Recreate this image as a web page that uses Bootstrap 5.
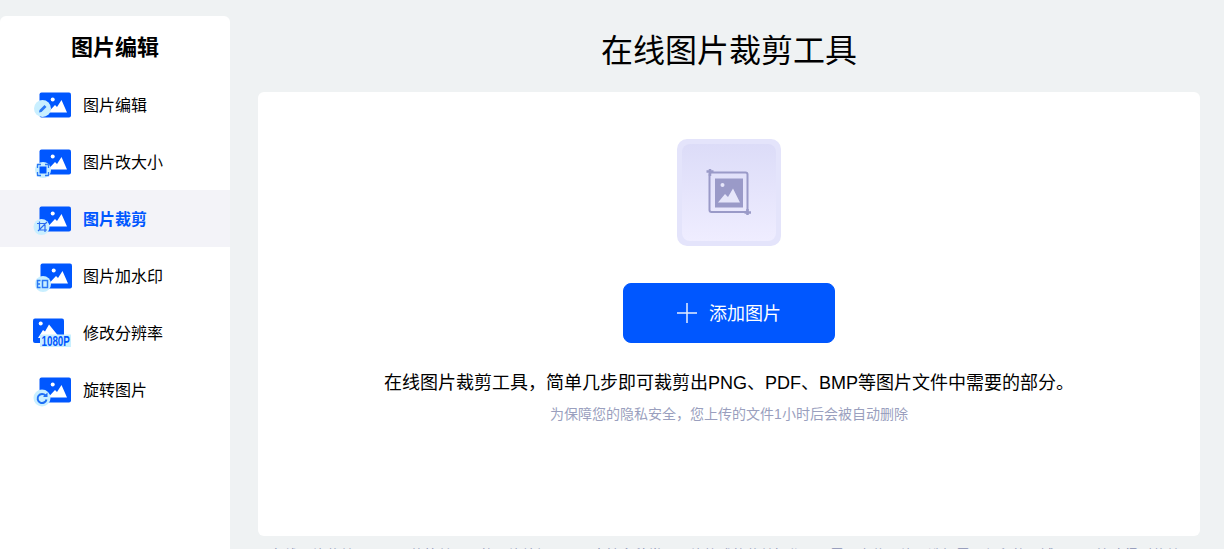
<!DOCTYPE html>
<html lang="zh-CN">
<head>
    <meta charset="UTF-8">
    <meta name="viewport" content="width=device-width, initial-scale=1.0">
    <title>在线图片裁剪工具</title>
    <link href="https://cdn.jsdelivr.net/npm/bootstrap@5.3.0/dist/css/bootstrap.min.css" rel="stylesheet">
    <style>
        html, body {
            height: 100%;
            overflow: hidden;
        }
        body {
            background-color: #eff2f3;
            font-family: "Liberation Sans", "Noto Sans CJK SC", sans-serif;
            color: #000;
        }
        .page-wrap {
            padding-top: 16px;
            height: 549px;
        }
        .side-panel {
            width: 230px;
            flex: none;
            height: 533px;
            background: #fff;
            border-radius: 6px 6px 0 0;
        }
        .side-title {
            font-size: 22px;
            line-height: 32px;
            font-weight: 700;
            text-align: center;
            padding-top: 16px;
            margin-bottom: 12px;
        }
        .side-item {
            height: 57px;
            padding-left: 30px;
            font-size: 16px;
            color: #000;
            text-decoration: none;
        }
        .side-item svg {
            width: 44px;
            height: 34px;
            flex: none;
            margin-right: 9px;
        }
        .side-label {
            margin-top: 2px;
        }
        .side-item.current {
            background: #f3f3f8;
            color: #0057ff;
            font-weight: 700;
        }
        .res-tag {
            font-family: "Liberation Sans", sans-serif;
            font-size: 14px;
            font-weight: 700;
            fill: #0057ff;
        }
        .main-col {
            padding: 0 24px 0 28px;
            min-width: 0;
            height: 533px;
            overflow: hidden;
        }
        .page-title {
            height: 76px;
            margin: 0;
            font-size: 32px;
            line-height: 70px;
            font-weight: 400;
            text-align: center;
        }
        .tool-box {
            height: 444px;
            padding-top: 47px;
            background: #fff;
            border-radius: 6px;
        }
        .crop-outer {
            width: 104px;
            height: 107px;
            padding: 5px;
            background: #e4e4fb;
            border-radius: 10px;
        }
        .crop-inner {
            height: 97px;
            background: linear-gradient(180deg, #dcdcf8, #efedff);
            border-radius: 8px;
        }
        .add-btn {
            width: 212px;
            height: 60px;
            margin-top: 37px;
            background: #0057ff;
            border-color: #0057ff;
            border-radius: 8px;
            font-size: 18px;
            gap: 12px;
        }
        .add-btn:hover {
            background: #0057ff;
            border-color: #0057ff;
        }
        .add-label {
            margin-top: 2px;
        }
        .tool-desc {
            margin: 27px 0 0;
            font-size: 18px;
            line-height: 26px;
        }
        .tool-note {
            margin: 9px 0 0;
            font-size: 14px;
            line-height: 19px;
            color: #9a9fbe;
        }
        .foot-text {
            margin: 7px 12px 0;
            font-size: 14px;
            line-height: 24px;
            color: #8a90b4;
        }
    </style>
</head>
<body>
    <svg width="0" height="0" class="position-absolute">
        <defs>
            <symbol id="pic" viewBox="0 0 44 34">
                <rect x="9.500" y="4.500" width="31.500" height="25" rx="2" fill="#0057ff"/>
                <circle cx="22.700" cy="11.500" r="2" fill="#fff"/>
                <path d="M18 24.500 L25 17 L27 19 L31.500 12 L37 24.500 Z" fill="#fff"/>
            </symbol>
        </defs>
    </svg>

    <div class="page-wrap d-flex">
        <div class="side-panel">
            <div class="side-title">图片编辑</div>

            <a href="#" class="side-item d-flex align-items-center">
                <svg viewBox="0 0 44 34">
                    <use href="#pic"/>
                    <circle cx="12.500" cy="20.500" r="8.500" fill="#c9efff"/>
                    <path d="M9 24.500 L9.500 22 L14.500 17 L16.500 19 L11.500 24 Z" fill="#2a78f5"/>
                </svg>
                <span class="side-label">图片编辑</span>
            </a>
            <a href="#" class="side-item d-flex align-items-center">
                <svg viewBox="0 0 44 34">
                    <use href="#pic"/>
                    <circle cx="13" cy="25" r="8" fill="#c9efff"/>
                    <rect x="9.500" y="21.500" width="7" height="7" fill="#0057ff"/>
                    <path d="M7.500 23 V19.500 H11 M15 19.500 H18.500 V23 M18.500 27 V30.500 H15 M11 30.500 H7.500 V27" fill="none" stroke="#2a78f5" stroke-width="1.300"/>
                </svg>
                <span class="side-label">图片改大小</span>
            </a>
            <a href="#" class="side-item current d-flex align-items-center">
                <svg viewBox="0 0 44 34">
                    <use href="#pic"/>
                    <circle cx="11.500" cy="25" r="8" fill="#c9efff"/>
                    <path d="M9.500 19.500 V28 H17 M7 21.500 H15 V30 M8 29 L17 20" fill="none" stroke="#2a6cf0" stroke-width="1.200"/>
                </svg>
                <span class="side-label">图片裁剪</span>
            </a>
            <a href="#" class="side-item d-flex align-items-center">
                <svg viewBox="0 0 44 34">
                    <use href="#pic" x="1"/>
                    <circle cx="13" cy="25" r="8" fill="#c9efff"/>
                    <path d="M10.500 21.500 H7.500 V28.500 H10.500 M7.500 25 H10 M12.500 21.500 H17.500 V28.500 H12.500 Z" fill="none" stroke="#2a78f5" stroke-width="1.500"/>
                </svg>
                <span class="side-label">图片加水印</span>
            </a>
            <a href="#" class="side-item d-flex align-items-center">
                <svg viewBox="0 0 44 34">
                    <rect x="3" y="2.500" width="31" height="24.500" rx="2" fill="#0057ff"/>
                    <circle cx="10.700" cy="7.500" r="2" fill="#fff"/>
                    <path d="M8 22 L13 14 L15 15.500 L19 8.500 L30 22 Z" fill="#fff"/>
                    <rect x="10" y="18.500" width="31" height="12.500" fill="#c9efff"/>
                    <text transform="translate(11.500 29.500) scale(0.7 1)" class="res-tag">1080P</text>
                </svg>
                <span class="side-label">修改分辨率</span>
            </a>
            <a href="#" class="side-item d-flex align-items-center">
                <svg viewBox="0 0 44 34">
                    <use href="#pic"/>
                    <circle cx="12" cy="25" r="8.500" fill="#c9efff"/>
                    <path d="M15.500 22.500 A4.500 4.500 0 1 0 16.500 26.500" fill="none" stroke="#1f6ff5" stroke-width="2"/>
                    <path d="M17.500 19.500 V24 H13 Z" fill="#1f6ff5"/>
                </svg>
                <span class="side-label">旋转图片</span>
            </a>
        </div>

        <div class="main-col flex-grow-1">
            <h1 class="page-title">在线图片裁剪工具</h1>
            <div class="tool-box d-flex flex-column align-items-center">
                <div class="crop-outer">
                    <div class="crop-inner d-flex align-items-center justify-content-center">
                        <svg width="50" height="50" viewBox="0 0 50 50">
                            <rect x="5.500" y="4.500" width="38" height="39.500" rx="2" fill="none" stroke="#9a9ac8" stroke-width="2"/>
                            <path d="M6 1 V8 M2.500 3.500 H9.500 M43.500 41 V47 M40.500 44.500 H47" stroke="#9a9ac8" stroke-width="2.500" fill="none"/>
                            <rect x="11" y="10.500" width="28" height="29" fill="#9a9ac8"/>
                            <circle cx="18.500" cy="17" r="2" fill="#e6e6fa"/>
                            <path d="M14 34.500 L21 26 L24 29 L29 20.500 L36 34.500 Z" fill="#e6e6fa"/>
                        </svg>
                    </div>
                </div>
                <button type="button" class="btn btn-primary add-btn d-flex align-items-center justify-content-center">
                    <svg width="20" height="20" viewBox="0 0 20 20">
                        <path d="M10 0 V20 M0 10 H20" stroke="#e6eeff" stroke-width="1.500" fill="none"/>
                    </svg>
                    <span class="add-label">添加图片</span>
                </button>
                <p class="tool-desc">在线图片裁剪工具，简单几步即可裁剪出PNG、PDF、BMP等图片文件中需要的部分。</p>
                <p class="tool-note">为保障您的隐私安全，您上传的文件1小时后会被自动删除</p>
            </div>
            <p class="foot-text">在线图片裁剪工具是一款简单易用的图片编辑工具，支持多种常见图片格式的裁剪操作，只需要上传图片，选择需要保留的区域，即可快速得到裁剪后的图片文件。</p>
        </div>
    </div>

    <script src="https://cdn.jsdelivr.net/npm/bootstrap@5.3.0/dist/js/bootstrap.bundle.min.js"></script>
</body>
</html>
